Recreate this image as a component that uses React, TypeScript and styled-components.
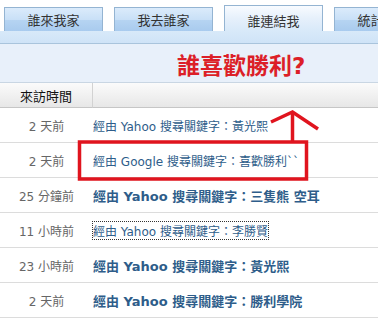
import React from "react";
import styled, { createGlobalStyle } from "styled-components";

const GlobalStyle = createGlobalStyle`
  html, body {
    margin: 0;
    padding: 0;
    background: #ffffff;
    font-family: "DejaVu Sans", "Noto Sans CJK TC", sans-serif;
  }
`;

type Visit = { time: string; engine: string; keyword: string; bold?: boolean; focused?: boolean };

const visits: Visit[] = [
  { time: "2 天前", engine: "Yahoo", keyword: "黃光熙" },
  { time: "2 天前", engine: "Google", keyword: "喜歡勝利``" },
  { time: "25 分鐘前", engine: "Yahoo", keyword: "三隻熊 空耳", bold: true },
  { time: "11 小時前", engine: "Yahoo", keyword: "李勝賢", focused: true },
  { time: "23 小時前", engine: "Yahoo", keyword: "黃光熙", bold: true },
  { time: "2 天前", engine: "Yahoo", keyword: "勝利學院", bold: true },
];

const tabs = ["誰來我家", "我去誰家", "誰連結我", "統計資料"];

const Page = styled.div`
  position: relative;
  width: 378px;
  height: 321px;
  overflow: hidden;
`;

const TabBar = styled.div`
  display: flex;
  align-items: flex-end;
  gap: 11px;
  height: 31px;
  padding-left: 4px;
  box-sizing: border-box;
`;

const Tab = styled.div<{ $active?: boolean }>`
  flex: 0 0 auto;
  width: 99px;
  height: ${(p) => (p.$active ? 26 : 24)}px;
  box-sizing: border-box;
  border: 1px solid #94b4d2;
  border-bottom: none;
  display: flex;
  align-items: center;
  justify-content: center;
  padding-top: ${(p) => (p.$active ? 3 : 0)}px;
  font-size: 13px;
  color: #333;
  white-space: nowrap;
  background: ${(p) =>
    p.$active
      ? "linear-gradient(#f8fbff, #e6f0fb 50%, #d8e9f9)"
      : "linear-gradient(#dbebfb, #c9e0f7 50%, #b6d4f2 52%, #a9cbee)"};
`;

const Band = styled.div`
  height: 12px;
  background: linear-gradient(#d8e9f9, #cfe3f7);
  border-bottom: 1px solid #a9c4dc;
`;

const TitleArea = styled.div`
  height: 38px;
  background: #e8f0fa;
  border-bottom: 1px solid #c9d6e3;
  display: flex;
  align-items: center;
  padding-left: 177px;
`;

const Title = styled.div`
  color: #dc1f28;
  font-size: 23px;
  font-weight: bold;
  padding-top: 2px;
`;

const Grid = styled.div`
  display: grid;
  grid-template-columns: 93px 1fr;
`;

const HeadCell = styled.div<{ $first?: boolean }>`
  height: 24px;
  background: linear-gradient(#fbfbfb, #e7e7e7);
  border-bottom: 1px solid #c6c6c6;
  border-right: ${(p) => (p.$first ? "1px solid #d2d2d2" : "none")};
  display: flex;
  align-items: center;
  padding-left: 20px;
  font-size: 13px;
  color: #111;
`;

const TimeCell = styled.div`
  height: 34px;
  border-bottom: 1px solid #dcdcdc;
  display: flex;
  align-items: center;
  justify-content: center;
  font-size: 12px;
  color: #666;
`;

const LinkCell = styled.div`
  height: 34px;
  border-bottom: 1px solid #dcdcdc;
  display: flex;
  align-items: center;
`;

const Link = styled.a<{ $bold?: boolean; $focused?: boolean }>`
  color: #2e5d8a;
  text-decoration: none;
  font-size: ${(p) => (p.$bold ? 13 : 12)}px;
  font-weight: ${(p) => (p.$bold ? "bold" : "normal")};
  outline: ${(p) => (p.$focused ? "1px dotted #333" : "none")};
  white-space: nowrap;
`;

const Overlay = styled.svg`
  position: absolute;
  left: 0;
  top: 0;
  pointer-events: none;
`;

export default function App() {
  return (
    <>
      <GlobalStyle />
      <Page>
        <TabBar>
          {tabs.map((t, i) => (
            <Tab key={t} $active={i === 2}>
              {t}
            </Tab>
          ))}
        </TabBar>
        <Band />
        <TitleArea>
          <Title>誰喜歡勝利?</Title>
        </TitleArea>
        <Grid>
          <HeadCell $first>來訪時間</HeadCell>
          <HeadCell />
          {visits.map((v, i) => (
            <React.Fragment key={i}>
              <TimeCell>{v.time}</TimeCell>
              <LinkCell>
                <Link href="#" $bold={v.bold} $focused={v.focused}>
                  經由 {v.engine} 搜尋關鍵字：{v.keyword}
                </Link>
              </LinkCell>
            </React.Fragment>
          ))}
        </Grid>
        <Overlay width="378" height="321" viewBox="0 0 378 321">
          <rect x="79.5" y="142" width="227" height="37" fill="none" stroke="#e0141e" strokeWidth="3.5" />
          <line x1="292.5" y1="141" x2="292.5" y2="113" stroke="#e0141e" strokeWidth="3.5" />
          <polyline points="271,122 292.5,112 318,129" fill="none" stroke="#e0141e" strokeWidth="3.5" />
        </Overlay>
      </Page>
    </>
  );
}
